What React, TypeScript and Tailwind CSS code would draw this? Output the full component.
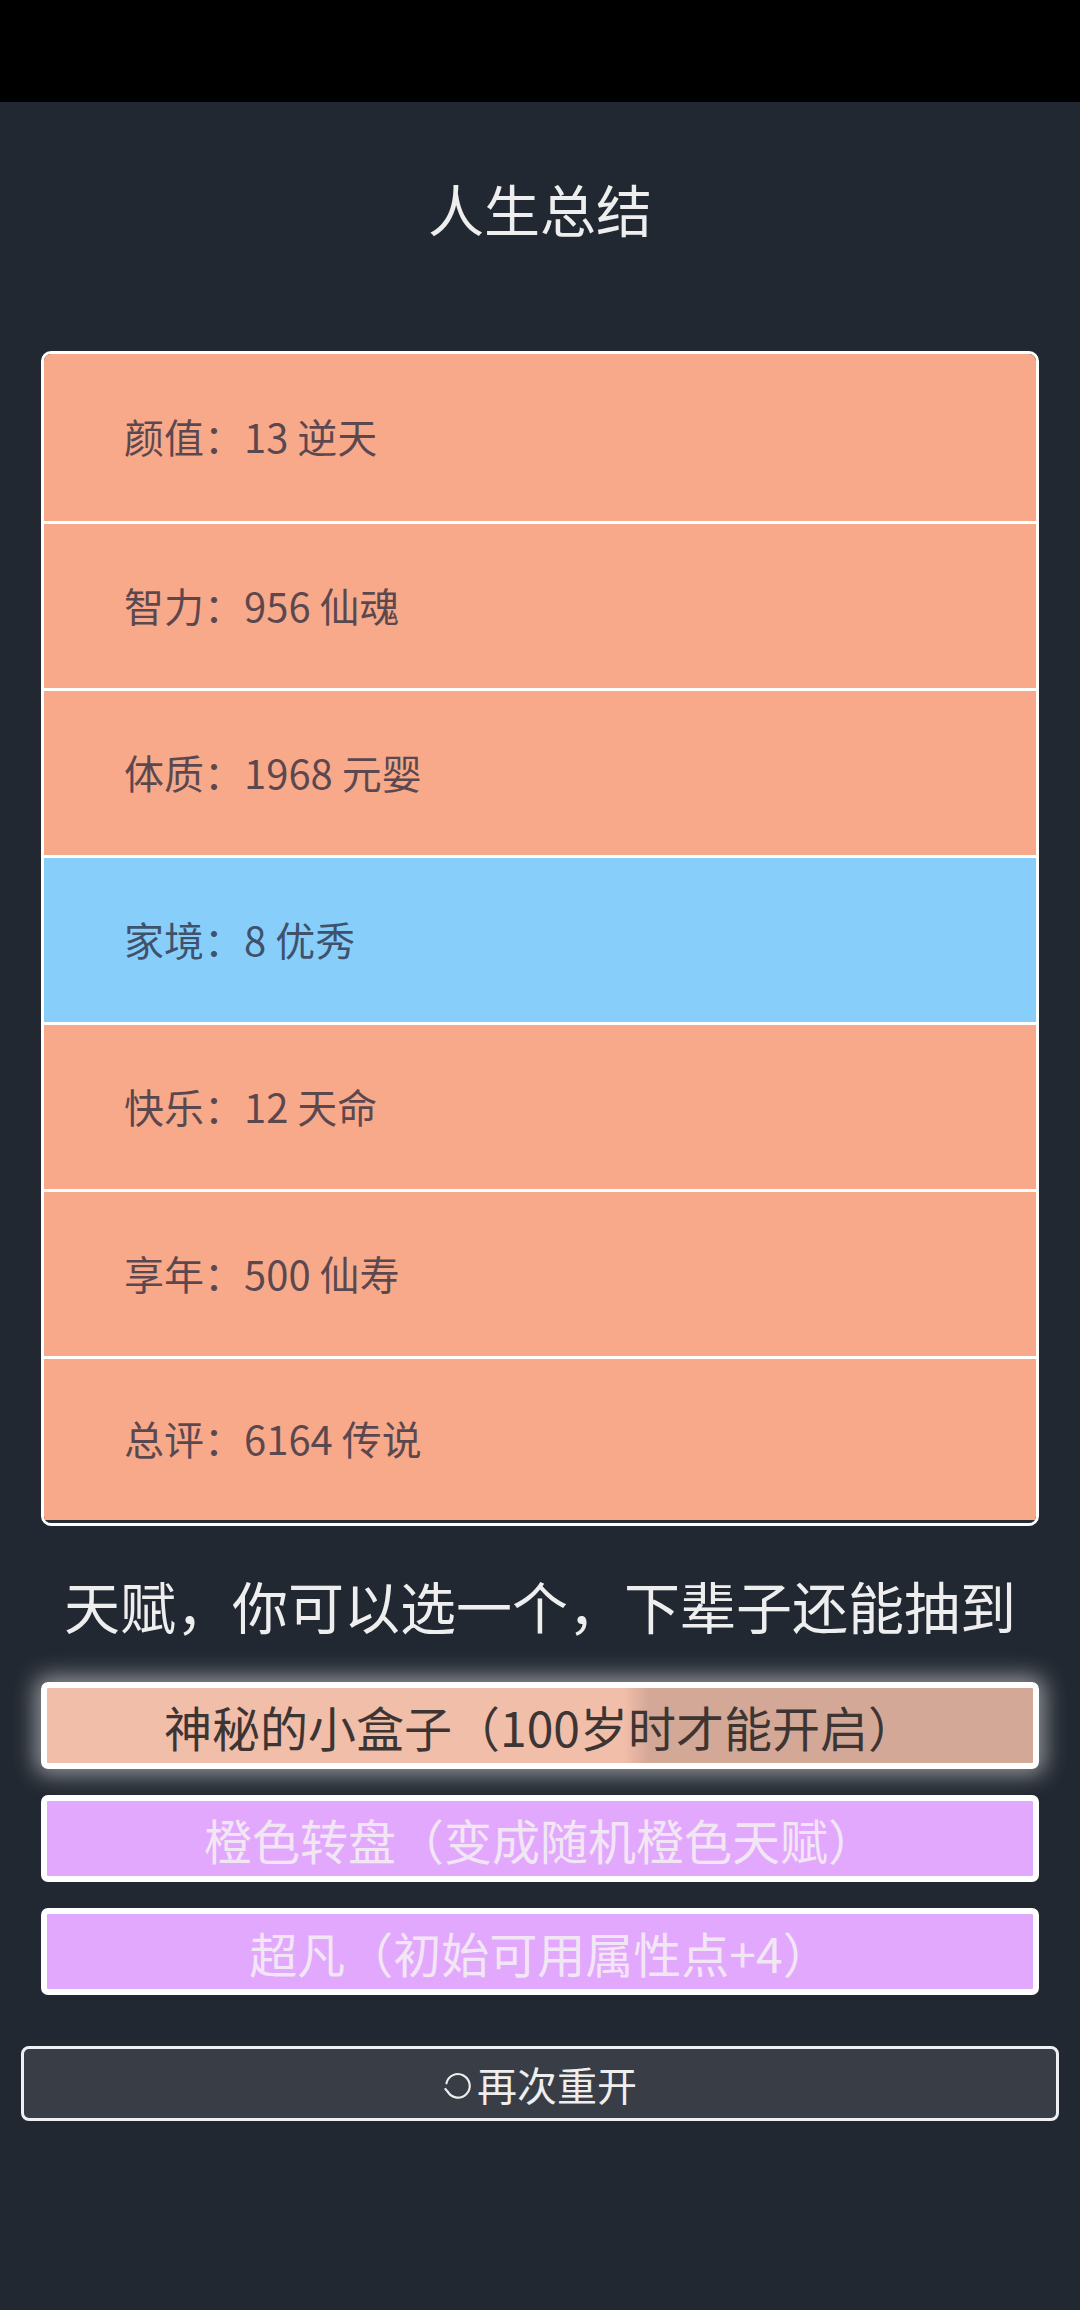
import React from 'react';

type Row = { label: string; value: string; blue?: boolean };

const rows: Row[] = [
  { label: '颜值', value: '13 逆天' },
  { label: '智力', value: '956 仙魂' },
  { label: '体质', value: '1968 元婴' },
  { label: '家境', value: '8 优秀', blue: true },
  { label: '快乐', value: '12 天命' },
  { label: '享年', value: '500 仙寿' },
  { label: '总评', value: '6164 传说' },
];

function RestartIcon() {
  return (
    <svg width="30" height="30" viewBox="0 0 28 28" fill="none" className="mr-[4px] mt-[4px]">
      <path
        d="M3.2 11.5 A11 11 0 1 1 4.5 19.5"
        stroke="#eeeeee"
        strokeWidth="2"
        strokeLinecap="round"
      />
      <path d="M4.5 19.5 L2.2 16.8" stroke="#eeeeee" strokeWidth="2" strokeLinecap="round" />
    </svg>
  );
}

export default function App() {
  return (
    <div
      className="min-h-[2310px] bg-[#222831] text-[#eeeeee]"
      style={{ fontFamily: '"Noto Sans CJK SC", "Noto Sans", sans-serif' }}
    >
      <div className="h-[102px] bg-black" />

      <h1 className="pt-[64px] text-center text-[56px] leading-[84px] font-normal">人生总结</h1>

      <div className="mx-[41px] mt-[101px] overflow-hidden rounded-[10px] border-[3px] border-white">
        {rows.map((r, i) => (
          <div
            key={r.label}
            className={
              'flex h-[167px] items-center pb-[3px] pl-[80px] text-[40px] text-[rgba(40,40,60,0.75)] ' +
              (r.blue ? 'bg-[#87cefa] ' : 'bg-[#f7a98a] ') +
              (i > 0 ? 'border-t-[3px] border-white ' : 'h-[164px] ') +
              (i === rows.length - 1 ? 'border-b-[3px] border-b-[#2a2d33]' : '')
            }
          >
            {r.label}：{r.value}
          </div>
        ))}
      </div>

      <div className="mt-[37px] text-center text-[56px] leading-[84px]">
        天赋，你可以选一个，下辈子还能抽到
      </div>

      <div className="mx-[41px] mt-[35px] flex flex-col gap-[26px]">
        <button className="h-[87px] rounded-[7px] border-[6px] border-white bg-[linear-gradient(90deg,#f1bea9_0%,#f1bea9_58.5%,#d4a897_61%,#d4a897_100%)] text-[48px] text-[#3d3533] shadow-[0_0_22px_6px_rgba(255,255,255,0.5)]">
          神秘的小盒子（100岁时才能开启）
        </button>
        <button className="h-[87px] rounded-[7px] border-[6px] border-white bg-[#e2a8fd] text-[48px] text-[#f2e6f5]">
          橙色转盘（变成随机橙色天赋）
        </button>
        <button className="h-[87px] rounded-[7px] border-[6px] border-white bg-[#e2a8fd] text-[48px] text-[#f2e6f5]">
          超凡（初始可用属性点+4）
        </button>
      </div>

      <button className="mx-[21px] mt-[51px] flex h-[75px] w-[1038px] items-center justify-center rounded-[8px] border-[3px] border-[#eef0f4] bg-[#393d46] text-[40px] text-[#eeeeee]">
        <RestartIcon />
        再次重开
      </button>
    </div>
  );
}
